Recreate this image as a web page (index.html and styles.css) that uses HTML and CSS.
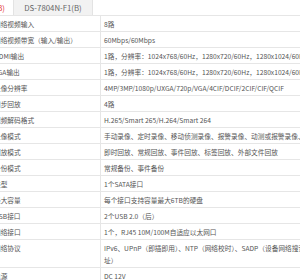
FILE: index.html
```html
<!DOCTYPE html>
<html lang="zh">
<head>
<meta charset="utf-8">
<link rel="stylesheet" href="styles.css">
</head>
<body>
<div class="page">
  <div class="tabs">
    <div class="tab active"><span>DS-7808N-F1(B)</span></div>
    <div class="tab"><span>DS-7804N-F1(B)</span></div>
  </div>
  <div class="spec">
    <div class="row"><div class="label">网络视频输入</div><div class="value">8路</div></div>
    <div class="row"><div class="label">网络视频带宽（输入/输出）</div><div class="value">60Mbps/60Mbps</div></div>
    <div class="row"><div class="label">HDMI输出</div><div class="value">1路，分辨率：1024x768/60Hz，1280x720/60Hz，1280x1024/60Hz，1920x1080/60Hz</div></div>
    <div class="row"><div class="label">VGA输出</div><div class="value">1路，分辨率：1024x768/60Hz，1280x720/60Hz，1280x1024/60Hz，1920x1080/60Hz</div></div>
    <div class="row"><div class="label">录像分辨率</div><div class="value">4MP/3MP/1080p/UXGA/720p/VGA/4CIF/DCIF/2CIF/CIF/QCIF</div></div>
    <div class="row"><div class="label">同步回放</div><div class="value">4路</div></div>
    <div class="row"><div class="label">视频解码格式</div><div class="value">H.265/Smart 265/H.264/Smart 264</div></div>
    <div class="row"><div class="label">录像模式</div><div class="value">手动录像、定时录像、移动侦测录像、报警录像、动测或报警录像、动测和报警录像</div></div>
    <div class="row"><div class="label">回放模式</div><div class="value">即时回放、常规回放、事件回放、标签回放、外部文件回放</div></div>
    <div class="row"><div class="label">备份模式</div><div class="value">常规备份、事件备份</div></div>
    <div class="row"><div class="label">类型</div><div class="value">1个SATA接口</div></div>
    <div class="row"><div class="label">最大容量</div><div class="value">每个接口支持容量最大6TB的硬盘</div></div>
    <div class="row"><div class="label">USB接口</div><div class="value">2个USB 2.0（后）</div></div>
    <div class="row"><div class="label">网络接口</div><div class="value">1个，RJ45 10M/100M自适应以太网口</div></div>
    <div class="row"><div class="label">网络协议</div><div class="value">IPv6、UPnP（即插即用）、NTP（网络校时）、SADP（设备网络搜索）、DHCP（自动获取IP地<br>址）</div></div>
    <div class="row"><div class="label">电源</div><div class="value">DC 12V</div></div>
  </div>
</div>
</body>
</html>
```
FILE: styles.css
```css
html, body {
  margin: 0;
  padding: 0;
  background: #fff;
}

body {
  width: 300px;
  height: 280px;
  overflow: hidden;
  font-family: "Noto Sans CJK SC", "Noto Sans", sans-serif;
  color: #555;
}

.page {
  margin-left: -10px;
  width: 700px;
}

.tabs {
  display: flex;
  height: 15px;
  margin-left: -55px;
}

.tab {
  box-sizing: border-box;
  flex: 0 0 79px;
  width: 79px;
  display: flex;
  justify-content: center;
  font-size: 7.8px;
  line-height: 15px;
  background: #f2f2f2;
  color: #666;
  border-right: 1px solid #e3e3e3;
  white-space: nowrap;
  overflow: hidden;
}

.tab.active {
  background: #fff;
  color: #e4393c;
  justify-content: flex-end;
  padding-right: 8px;
}

.spec {
  border-top: 1px solid #e6e6e6;
  font-size: 6.7px;
}

.row {
  display: grid;
  grid-template-columns: 111px auto;
  border-bottom: 1px solid #e6e6e6;
}

.label {
  border-right: 1px solid #e6e6e6;
  padding: 2px 4px 1px 4px;
  line-height: 12px;
  white-space: nowrap;
  overflow: hidden;
}

.value {
  padding: 2px 3px 1px 3px;
  line-height: 12px;
  white-space: nowrap;
}
```
